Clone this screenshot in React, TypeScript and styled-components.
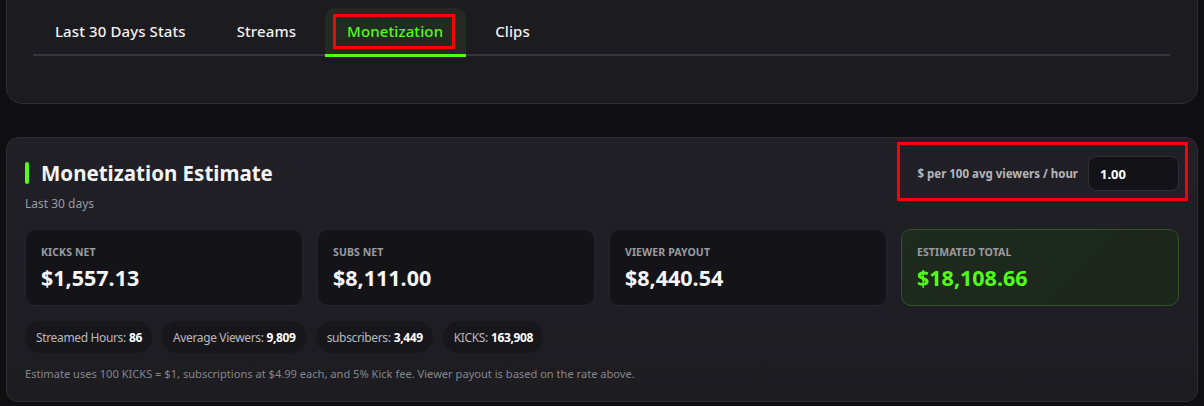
import React from "react";
import styled, { createGlobalStyle } from "styled-components";

const Global = createGlobalStyle`
  html, body { margin: 0; padding: 0; background: #0f0f11; }
  body { font-family: "Noto Sans", "Open Sans", sans-serif; color: #f2f2f4; overflow: hidden; }
  * { box-sizing: border-box; }
`;

const Page = styled.div`
  width: 1204px;
  height: 406px;
  padding: 0 6px 0 6px;
  display: flex;
  flex-direction: column;
  gap: 33px;
  overflow: hidden;
`;

const TabsCard = styled.section`
  margin-top: -20px;
  height: 124px;
  background: #1b1b20;
  border: 1px solid #2c2c32;
  border-radius: 16px;
  padding: 27px 27px 0 26px;
`;

const TabBar = styled.nav`
  display: flex;
  gap: 7px;
  border-bottom: 2px solid #35353b;
  height: 48px;
`;

const Tab = styled.button<{ $active?: boolean }>`
  font-family: inherit;
  font-size: 15px;
  font-weight: 500;
  letter-spacing: 0.1px;
  color: ${(p) => (p.$active ? "#53fc18" : "#f1f1f3")};
  background: ${(p) => (p.$active ? "#232a21" : "transparent")};
  border: none;
  border-bottom: 3px solid ${(p) => (p.$active ? "#53fc18" : "transparent")};
  margin-bottom: -2px;
  border-radius: 10px 10px 0 0;
  padding: 0 22px;
  height: 49px;
  display: flex;
  align-items: center;
  cursor: pointer;
`;

const Marked = styled.span`
  border: 3px solid #ff0000;
  padding: 4px 9px 5px 11px;
  margin: 0 -11px 0 -14px;
  line-height: 20px;
`;

const EstimateCard = styled.section`
  background: linear-gradient(180deg, #202026 0%, #1c1c21 100%);
  border: 1px solid #2c2c32;
  border-radius: 12px;
  padding: 4px 18px 18px 18px;
  height: 265px;
`;

const Header = styled.header`
  display: flex;
  justify-content: space-between;
  align-items: flex-start;
`;

const TitleBlock = styled.div`
  margin-top: 19px;
`;

const Title = styled.h2`
  margin: 0;
  display: flex;
  align-items: center;
  gap: 12px;
  font-size: 20.5px;
  font-weight: 700;
  line-height: 24px;
  color: #f4f4f6;
  &::before {
    content: "";
    width: 4px;
    height: 22px;
    border-radius: 2px;
    background: #53fc18;
  }
`;

const Subtitle = styled.div`
  margin-top: 11px;
  font-size: 12px;
  line-height: 16px;
  color: #9a9aa0;
`;

const RateBox = styled.label`
  display: flex;
  align-items: center;
  gap: 10px;
  border: 3px solid #ff0000;
  padding: 11px 6px 7px 17px;
  margin-right: -9px;
`;

const RateLabel = styled.span`
  font-size: 11.5px;
  font-weight: 700;
  color: #b6b6bb;
`;

const RateInput = styled.input`
  width: 91px;
  height: 35px;
  background: #131317;
  border: 1px solid #2f2f36;
  border-radius: 8px;
  color: #ffffff;
  font-family: inherit;
  font-size: 13px;
  font-weight: 700;
  padding: 0 11px;
  outline: none;
`;

const StatGrid = styled.div`
  margin-top: 17px;
  display: grid;
  grid-template-columns: repeat(4, 1fr);
  gap: 14px;
`;

const StatCard = styled.div<{ $highlight?: boolean }>`
  height: 77px;
  border-radius: 10px;
  padding: 15px 15px 12px;
  background: ${(p) =>
    p.$highlight ? "linear-gradient(135deg, #1f2b1f 0%, #1c261b 100%)" : "#141418"};
  border: 1px solid ${(p) => (p.$highlight ? "#2f5526" : "#24242a")};
`;

const StatLabel = styled.div`
  font-size: 10.5px;
  font-weight: 700;
  line-height: 14px;
  color: #9b9ba1;
  text-transform: uppercase;
  letter-spacing: 0.1px;
`;

const StatValue = styled.div<{ $highlight?: boolean }>`
  margin-top: 6px;
  font-size: 21.5px;
  font-weight: 700;
  line-height: 26px;
  color: ${(p) => (p.$highlight ? "#53fc18" : "#f6f6f8")};
`;

const Pills = styled.div`
  margin-top: 15px;
  display: flex;
  gap: 10px;
`;

const Pill = styled.div`
  height: 32px;
  border-radius: 16px;
  background: #17171b;
  padding: 0 10px 0 11px;
  display: flex;
  align-items: center;
  font-size: 12px;
  letter-spacing: -0.35px;
  color: #b9b9be;
  white-space: nowrap;
  b {
    color: #ffffff;
    font-weight: 700;
    margin-left: 3px;
  }
`;

const Note = styled.p`
  margin: 13px 0 0;
  font-size: 11.1px;
  line-height: 16px;
  color: #86868c;
`;

const stats = [
  { label: "Kicks net", value: "$1,557.13" },
  { label: "Subs net", value: "$8,111.00" },
  { label: "Viewer payout", value: "$8,440.54" },
  { label: "Estimated total", value: "$18,108.66", highlight: true },
];

const pills = [
  { label: "Streamed Hours:", value: "86" },
  { label: "Average Viewers:", value: "9,809" },
  { label: "subscribers:", value: "3,449" },
  { label: "KICKS:", value: "163,908" },
];

export default function App() {
  return (
    <>
      <Global />
      <Page>
        <TabsCard>
          <TabBar>
            <Tab>Last 30 Days Stats</Tab>
            <Tab>Streams</Tab>
            <Tab $active>
              <Marked>Monetization</Marked>
            </Tab>
            <Tab>Clips</Tab>
          </TabBar>
        </TabsCard>
        <EstimateCard>
          <Header>
            <TitleBlock>
              <Title>Monetization Estimate</Title>
              <Subtitle>Last 30 days</Subtitle>
            </TitleBlock>
            <RateBox>
              <RateLabel>$ per 100 avg viewers / hour</RateLabel>
              <RateInput defaultValue="1.00" />
            </RateBox>
          </Header>
          <StatGrid>
            {stats.map((s) => (
              <StatCard key={s.label} $highlight={s.highlight}>
                <StatLabel>{s.label}</StatLabel>
                <StatValue $highlight={s.highlight}>{s.value}</StatValue>
              </StatCard>
            ))}
          </StatGrid>
          <Pills>
            {pills.map((p) => (
              <Pill key={p.label}>
                {p.label}
                <b>{p.value}</b>
              </Pill>
            ))}
          </Pills>
          <Note>
            Estimate uses 100 KICKS = $1, subscriptions at $4.99 each, and 5% Kick fee. Viewer payout is based on the rate above.
          </Note>
        </EstimateCard>
      </Page>
    </>
  );
}
